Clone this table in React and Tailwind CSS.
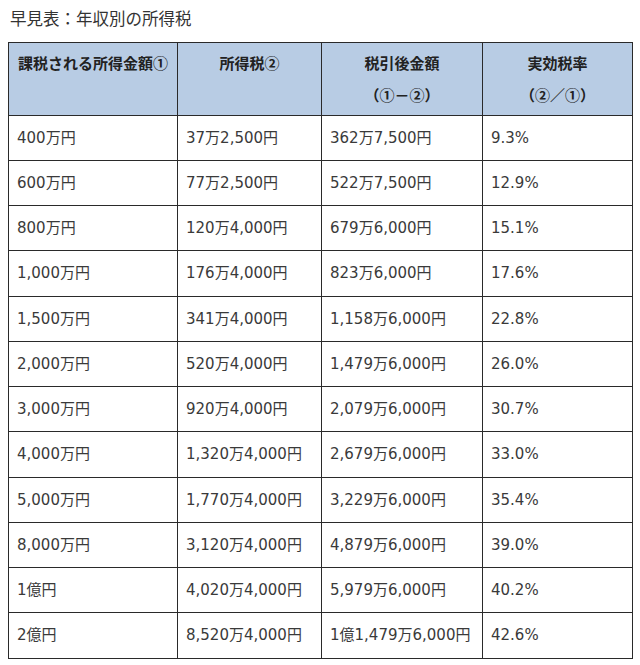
import React from "react";

const rows = [
  ["400万円", "37万2,500円", "362万7,500円", "9.3%"],
  ["600万円", "77万2,500円", "522万7,500円", "12.9%"],
  ["800万円", "120万4,000円", "679万6,000円", "15.1%"],
  ["1,000万円", "176万4,000円", "823万6,000円", "17.6%"],
  ["1,500万円", "341万4,000円", "1,158万6,000円", "22.8%"],
  ["2,000万円", "520万4,000円", "1,479万6,000円", "26.0%"],
  ["3,000万円", "920万4,000円", "2,079万6,000円", "30.7%"],
  ["4,000万円", "1,320万4,000円", "2,679万6,000円", "33.0%"],
  ["5,000万円", "1,770万4,000円", "3,229万6,000円", "35.4%"],
  ["8,000万円", "3,120万4,000円", "4,879万6,000円", "39.0%"],
  ["1億円", "4,020万4,000円", "5,979万6,000円", "40.2%"],
  ["2億円", "8,520万4,000円", "1億1,479万6,000円", "42.6%"],
];

const App = () => {
  return (
    <div className="w-[640px] h-[665px] bg-white text-[#333] font-['DejaVu_Sans','Noto_Sans_CJK_JP',sans-serif]">
      <div className="h-[42px] pl-[10px] pt-[6px] text-[16.5px] leading-[24px] font-['Noto_Sans_CJK_JP',sans-serif]">
        早見表：年収別の所得税
      </div>
      <table className="ml-[8px] w-[624px] border-collapse table-fixed">
        <colgroup>
          <col className="w-[169px]" />
          <col className="w-[144px]" />
          <col className="w-[161px]" />
          <col className="w-[150px]" />
        </colgroup>
        <thead>
          <tr className="bg-[#b8cce4] font-['Noto_Sans_CJK_JP',sans-serif] font-bold text-[15px] leading-[32px] text-[#222]">
            <th className="border border-[#2a2a2a] h-[73px] px-1 py-[4px] align-top text-center font-bold">課税される所得金額①</th>
            <th className="border border-[#2a2a2a] px-1 py-[4px] align-top text-center font-bold">所得税②</th>
            <th className="border border-[#2a2a2a] px-1 py-[4px] align-top text-center font-bold">
              税引後金額
              <br />
              （①－②）
            </th>
            <th className="border border-[#2a2a2a] px-1 py-[4px] align-top text-center font-bold">
              実効税率
              <br />
              （②／①）
            </th>
          </tr>
        </thead>
        <tbody className="text-[15px] text-[#3a3a3a]">
          {rows.map((r, i) => (
            <tr key={i} className={i % 4 === 3 ? "h-[46px]" : "h-[45px]"}>
              {r.map((c, j) => (
                <td key={j} className="border border-[#2a2a2a] px-[8px] align-middle whitespace-nowrap">
                  {c}
                </td>
              ))}
            </tr>
          ))}
        </tbody>
      </table>
    </div>
  );
};

export default App;
